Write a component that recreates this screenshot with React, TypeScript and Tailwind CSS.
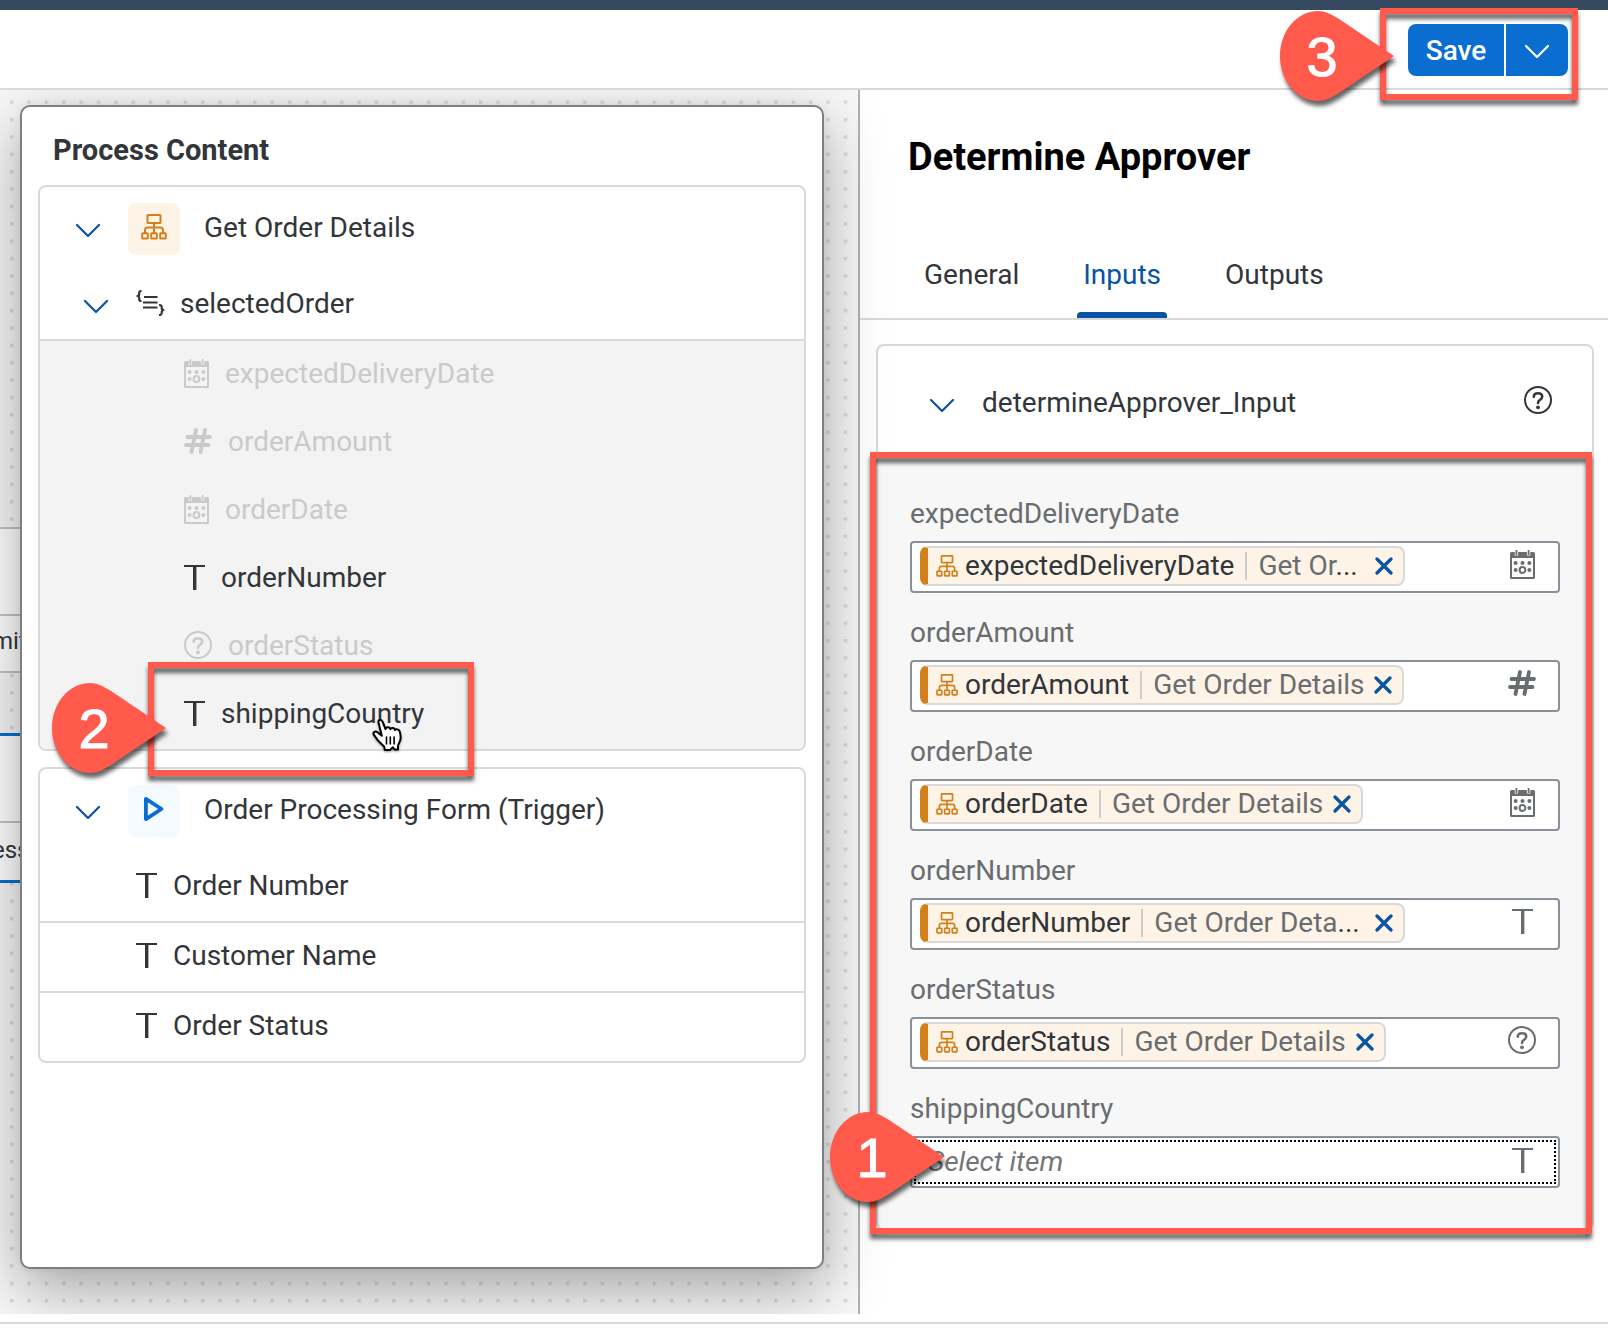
import type { ReactNode } from "react";

type Kind = "date" | "number" | "text" | "unknown";

function Chevron({ className = "" }: { className?: string }) {
  return (
    <svg viewBox="0 0 24 24" className={"h-6 w-6 shrink-0 " + className} fill="none" stroke="currentColor" strokeWidth="2.2" strokeLinecap="round" strokeLinejoin="round" aria-hidden="true">
      <path d="M1 10 12 21 23 10" />
    </svg>
  );
}

function HierarchyIcon({ className = "" }: { className?: string }) {
  return (
    <svg viewBox="0 0 26 26" className={"shrink-0 " + className} fill="none" stroke="currentColor" strokeWidth="2" strokeLinejoin="round" aria-hidden="true">
      <rect x="6.500" y="1" width="13" height="8" rx="0.600" />
      <path d="M13 9v10M4 19v-3q0-2.500 2.500-2.500h13q2.500 0 2.500 2.500v3" />
      <rect x="1.200" y="19.200" width="5.600" height="5.400" rx="0.600" />
      <rect x="10.200" y="19.200" width="5.600" height="5.400" rx="0.600" />
      <rect x="19.200" y="19.200" width="5.600" height="5.400" rx="0.600" />
    </svg>
  );
}

function ObjectIcon() {
  return (
    <svg viewBox="0 0 30 26" className="h-[26px] w-[30px] shrink-0" fill="none" stroke="#32363a" strokeWidth="2.200" aria-hidden="true">
      <path d="M5.500 1H5Q3.200 1 3.200 3v1.200Q3.200 6 .6 6q2.600 0 2.600 1.800V9Q3.200 11 5 11h.5" />
      <path d="M23 15h.5q2.200 0 2.200 2v1.200q0 1.800 2.600 1.800-2.600 0-2.600 1.800V23q0 2-2.200 2H23" />
      <path strokeWidth="1.900" d="M8 7H21.500M7 12.500H21.500M7 17.500H21.500" />
    </svg>
  );
}

function CalendarIcon() {
  return (
    <svg viewBox="0 0 25 29" className="h-[29px] w-[25px] shrink-0" fill="currentColor" aria-hidden="true">
      <path d="M5.500 0h1.800v5H5.500zM17.700 0h1.800v5h-1.800z" />
      <path fillRule="evenodd" d="M1.500 2h3.200v3.400h3.400V2h8.800v3.400h3.400V2h3.200Q25 2 25 3.500v24q0 1.500-1.500 1.500h-22Q0 29 0 27.500v-24Q0 2 1.500 2zM2 8v19h21V8z" />
      <circle cx="5.600" cy="13" r="2" />
      <circle cx="12.500" cy="13" r="2" />
      <circle cx="19.400" cy="13" r="2" />
      <circle cx="5.600" cy="20" r="2" />
      <circle cx="19.400" cy="20" r="2" />
      <circle cx="12.500" cy="20" r="2.900" fill="none" stroke="currentColor" strokeWidth="2" />
    </svg>
  );
}

function HashIcon() {
  return (
    <svg viewBox="0 0 28 26" className="h-[26px] w-7 shrink-0" fill="none" stroke="currentColor" strokeWidth="3.800" strokeLinecap="round" aria-hidden="true">
      <path d="M3.500 9H26M2 17h22.500M12 2 7.500 24M21 2l-4.500 22" />
    </svg>
  );
}

function TextIcon() {
  return (
    <svg viewBox="0 0 21 25" className="h-[25px] w-[21px] shrink-0" fill="currentColor" aria-hidden="true">
      <rect x="0" y="0" width="21" height="2" />
      <rect x="9" y="0" width="3.400" height="25" />
    </svg>
  );
}

function HelpIcon() {
  return (
    <svg viewBox="0 0 28 28" className="h-7 w-7 shrink-0" fill="none" stroke="currentColor" strokeWidth="2" strokeLinecap="round" aria-hidden="true">
      <circle cx="14" cy="14" r="13" />
      <path strokeWidth="2.600" d="M9.800 10.800Q9.800 7.200 14 7.200t4.200 3.400q0 2-2.200 3.200-2 1-2 3.200" />
      <circle cx="14" cy="21.300" r="1.900" fill="currentColor" stroke="none" />
    </svg>
  );
}

function KindIcon({ kind }: { kind: Kind }) {
  if (kind === "date") return <CalendarIcon />;
  if (kind === "number") return <HashIcon />;
  if (kind === "text") return <TextIcon />;
  return <HelpIcon />;
}

/* Numbered teardrop marker whose tip points to the right. */
function Callout({ n, className }: { n: number; className: string }) {
  return (
    <div className={"pointer-events-none absolute z-40 h-[90px] w-[115px] " + className}>
      <svg viewBox="0 0 115 90" className="absolute inset-0 h-full w-full overflow-visible drop-shadow-[2px_5px_2px_rgba(0,0,0,0.6)]" aria-hidden="true">
        <path fill="#ff5a4b" d="M114 45C96 33 74 18 59 8 51 3 45 0 38 0 17 0 0 20 0 45s17 45 38 45c7 0 13-3 21-8 15-10 37-25 55-37Z" />
      </svg>
      <span className="absolute inset-y-0 left-0 flex w-[84px] items-center justify-center pt-0.5 font-['Liberation_Sans',sans-serif] text-[56px] leading-none text-white [-webkit-text-stroke:1px_white]">{n}</span>
    </div>
  );
}

function Frame({ className }: { className: string }) {
  return <div className={"pointer-events-none absolute z-30 border-[6px] border-[#ff5a4b] drop-shadow-[0_5px_2px_rgba(0,0,0,0.6)] " + className} />;
}

function HandCursor() {
  return (
    <svg viewBox="0 0 30 32" className="pointer-events-none absolute top-[38px] left-[332px] z-20 h-8 w-[30px] drop-shadow-[0_1px_1px_rgba(0,0,0,0.4)]" fill="#fff" stroke="#000" strokeWidth="2" strokeLinejoin="round" strokeLinecap="round" aria-hidden="true">
      <path d="M6.500 3.500C5.800.600 9.300 0 10.500 2.700L13.500 10c.8-2.300 4.300-2.300 4.800.3.900-1.900 4.200-1.500 4.600.7 1.200-1.300 4.200-.8 4.800 1.400.8 3 1.200 5 .8 7.500-.4 3-2 4.500-2.500 7v3.600h-3.500l-1.600-2.200-3 2.700h-5l-.8-3.500C9 25 4.500 20.500 1.700 15.500c-1-2.500 1.700-3.900 3.800-2.300l4.300 3.600Z" />
      <path strokeWidth="1.600" d="M14.500 18v7M18.300 18v7M22.100 18v7" fill="none" />
    </svg>
  );
}

function GroupHead({ tile, label }: { tile: ReactNode; label: string }) {
  return (
    <div className="flex h-20 items-center pl-9">
      <button type="button" aria-label={"Collapse " + label} className="text-[#0854a0]">
        <Chevron />
      </button>
      <span className="mt-1 ml-7">{tile}</span>
      <span className="ml-6 pt-0.5">{label}</span>
    </div>
  );
}

const orderFields: { name: string; kind: Kind; enabled?: boolean }[] = [
  { name: "expectedDeliveryDate", kind: "date" },
  { name: "orderAmount", kind: "number" },
  { name: "orderDate", kind: "date" },
  { name: "orderNumber", kind: "text", enabled: true },
  { name: "orderStatus", kind: "unknown" },
];

function OrderRow({ name, kind, enabled, children }: { name: string; kind: Kind; enabled?: boolean; children?: ReactNode }) {
  return (
    <li className={"relative h-[68px] " + (enabled ? "text-[#32363a]" : "text-[#cacaca]")}>
      <button type="button" disabled={!enabled} className="flex h-full w-full items-center gap-4 pb-1 pl-36 text-left">
        <KindIcon kind={kind} />
        <span className="pt-0.5">{name}</span>
      </button>
      {children}
    </li>
  );
}

function ProcessContent() {
  return (
    <section className="relative z-10 flex flex-1 flex-col rounded-[10px] border-2 border-[#7f7f7f] bg-white px-4 shadow-[0_20px_60px_rgba(0,0,0,0.34),0_0_8px_rgba(0,0,0,0.06)]">
      <h2 className="h-[78px] pt-[25px] pl-[15px] text-[29px] leading-9 font-bold">Process Content</h2>

      <div className="rounded-lg border-2 border-[#d9d9d9]">
        <GroupHead
          label="Get Order Details"
          tile={
            <span className="flex h-[52px] w-[52px] items-center justify-center rounded-lg bg-[#fef3e7] pb-1">
              <HierarchyIcon className="h-[26px] w-[26px] text-[#d4801a]" />
            </span>
          }
        />
        <div className="flex h-[72px] items-center pl-11">
          <button type="button" aria-label="Collapse selectedOrder" className="text-[#0854a0]">
            <Chevron />
          </button>
          <span className="ml-7">
            <ObjectIcon />
          </span>
          <span className="ml-[14px] pt-0.5">selectedOrder</span>
        </div>
        <ul className="rounded-b-md border-t-2 border-[#d9d9d9] bg-[#f3f3f3]">
          {orderFields.map((f) => (
            <OrderRow key={f.name} {...f} />
          ))}
          <OrderRow name="shippingCountry" kind="text" enabled>
            <HandCursor />
            <Frame className="-top-[19px] left-[108px] h-[114px] w-[326px]" />
            <Callout n={2} className="top-0.5 left-3" />
          </OrderRow>
        </ul>
      </div>

      <div className="mt-4 rounded-lg border-2 border-[#d9d9d9]">
        <GroupHead
          label="Order Processing Form (Trigger)"
          tile={
            <span className="flex h-[52px] w-[52px] items-center justify-center rounded-lg bg-[#f5faff] pb-1">
              <svg viewBox="0 0 22 26" className="h-[26px] w-[22px]" fill="none" stroke="#0a6ed1" strokeWidth="3.800" strokeLinejoin="round" aria-hidden="true">
                <path d="M2.900 2.900v20.200L18.500 13Z" />
              </svg>
            </span>
          }
        />
        <ul className="divide-y-2 divide-[#d9d9d9]">
          {["Order Number", "Customer Name", "Order Status"].map((name) => (
            <li key={name} className="first:pt-1">
              <button type="button" className="flex h-[68px] w-full items-center gap-4 pb-1 pl-24 text-left">
                <TextIcon />
                <span className="pt-0.5">{name}</span>
              </button>
            </li>
          ))}
        </ul>
      </div>
    </section>
  );
}

/* Dotted workflow canvas with the edges of two steps showing beside the popover. */
function Canvas() {
  return (
    <div className="relative flex min-w-0 flex-col border-r-2 border-[#b0b0b0] bg-[#f7f7f7] pt-[15px] pr-[34px] pb-[45px] pl-5">
      <svg className="absolute inset-0 h-full w-full" aria-hidden="true">
        <defs>
          <pattern id="dots" width="17.370" height="17.370" patternUnits="userSpaceOnUse" x="10" y="10.500">
            <rect width="3.400" height="3.400" fill="#d9d9d9" />
          </pattern>
        </defs>
        <rect width="100%" height="100%" fill="url(#dots)" />
      </svg>
      <div className="absolute top-[437px] left-0 h-[146px] w-10 overflow-hidden border-y-2 border-[#c4c4c4] bg-white text-[24px]">
        <div className="mt-[85px] h-[57px] border-t-2 border-[#c4c4c4] leading-[50px]">
          <span className="-ml-2">mit</span>
        </div>
      </div>
      <div className="absolute top-[643px] left-0 h-[150px] w-10 overflow-hidden border-y-[3px] border-[#0a6ed1] bg-white text-[24px]">
        <div className="mt-[85px] h-[57px] border-t-2 border-[#c4c4c4] leading-[54px]">
          <span className="-ml-2">ess</span>
        </div>
      </div>
      <ProcessContent />
    </div>
  );
}

const inputs: { name: string; kind: Kind; source: string; cut?: boolean }[] = [
  { name: "expectedDeliveryDate", kind: "date", source: "Get Or", cut: true },
  { name: "orderAmount", kind: "number", source: "Get Order Details" },
  { name: "orderDate", kind: "date", source: "Get Order Details" },
  { name: "orderNumber", kind: "text", source: "Get Order Deta", cut: true },
  { name: "orderStatus", kind: "unknown", source: "Get Order Details" },
];

function TokenField({ name, kind, source, cut }: { name: string; kind: Kind; source: string; cut?: boolean }) {
  return (
    <div>
      <label htmlFor={name} className="block pt-6 pb-[11px] leading-8 text-[#6a6d70]">
        {name}
      </label>
      <div className="flex h-[52px] items-start rounded border-2 border-[#89919a] bg-white pr-[22px] pl-2">
        <div className={"mt-[3px] flex h-10 items-center rounded-lg border-2 border-l-8 border-[#d9d9d9] border-l-[#d4801a] bg-[#fef3e7] pr-[10px] pl-2 whitespace-nowrap " + (cut ? "w-[485px]" : "")}>
          <HierarchyIcon className="h-[22px] w-[22px] text-[#d4801a]" />
          <span className="ml-[7px]">{name}</span>
          <span className="mx-[11px] h-7 w-0.5 bg-[#ccc]" />
          <span className="text-[#6a6d70]">
            {source}
            {cut && <span className="text-[#32363a]">...</span>}
          </span>
          <button type="button" aria-label={"Remove " + name} className={"text-[#0854a0] " + (cut ? "ml-auto" : "ml-[10px]")}>
            <svg viewBox="0 0 18 18" className="h-[18px] w-[18px]" fill="none" stroke="currentColor" strokeWidth="3.200" strokeLinecap="round" aria-hidden="true">
              <path d="M2 2l14 14M16 2 2 16" />
            </svg>
          </button>
        </div>
        <input id={name} type="text" className="h-full min-w-0 flex-1 bg-transparent outline-none" />
        <span className="flex h-full w-7 items-center justify-center pb-1.5 text-[#6a6d70]">
          <KindIcon kind={kind} />
        </span>
      </div>
    </div>
  );
}

function Tab({ children, active }: { children: string; active?: boolean }) {
  return (
    <button type="button" role="tab" aria-selected={!!active} className={"relative px-1.5 pt-0.5 " + (active ? "text-[#0854a0]" : "")}>
      {children}
      {active && <span className="absolute inset-x-0 bottom-0 h-1.5 rounded-t bg-[#0854a0]" />}
    </button>
  );
}

function DetailsPanel() {
  return (
    <aside className="min-w-0 bg-white">
      <h1 className="pt-[47px] pl-12 text-[38px] leading-10 font-bold text-black">Determine Approver</h1>
      <div role="tablist" className="mt-[53px] flex h-[90px] gap-[52px] border-b-2 border-[#d9d9d9] pl-[58px]">
        <Tab>General</Tab>
        <Tab active>Inputs</Tab>
        <Tab>Outputs</Tab>
      </div>

      <section className="mt-6 mr-[14px] ml-4 rounded-lg border-2 border-[#d9d9d9]">
        <div className="flex h-28 items-center pr-10 pl-[52px]">
          <button type="button" aria-label="Collapse determineApprover_Input" className="text-[#0854a0]">
            <Chevron />
          </button>
          <span className="ml-7 pt-0.5">determineApprover_Input</span>
          <button type="button" aria-label="Help" className="mb-1 ml-auto">
            <HelpIcon />
          </button>
        </div>
        <div className="relative rounded-b-md bg-[#f7f7f7] px-8 pt-4 pb-10">
          {inputs.map((f) => (
            <TokenField key={f.name} {...f} />
          ))}
          <div>
            <label htmlFor="shippingCountry" className="block pt-6 pb-[11px] leading-8 text-[#6a6d70]">
              shippingCountry
            </label>
            <div className="h-[52px] rounded border-2 border-[#89919a] bg-white p-0.5">
              <div className="flex h-full items-center border-2 border-dotted border-black pr-[18px] pl-3">
                <input id="shippingCountry" type="text" placeholder="Select item" className="min-w-0 flex-1 bg-transparent outline-none placeholder:text-[#74777a] placeholder:italic" />
                <span className="flex h-full w-7 items-center justify-center pb-1 text-[#6a6d70]">
                  <TextIcon />
                </span>
              </div>
            </div>
          </div>
          <Frame className="-top-1.5 right-0 -bottom-1.5 -left-2" />
          <Callout n={1} className="bottom-[26px] -left-12" />
        </div>
      </section>
    </aside>
  );
}

export default function App() {
  return (
    <div className="flex min-h-screen flex-col bg-white font-[Roboto,'Open_Sans',sans-serif] text-[28px] leading-8 text-[#32363a]">
      <div className="h-[10px] bg-[#354a5f]" />
      <header className="flex h-20 items-start justify-end border-b-2 border-[#d9d9d9] pt-[14px] pr-10">
        <div className="relative flex h-[52px] gap-0.5 text-white">
          <button type="button" className="w-24 rounded-l-lg bg-[#0a6ed1] pt-0.5 font-medium">
            Save
          </button>
          <button type="button" aria-label="More save options" className="flex w-[62px] items-center justify-center rounded-r-lg bg-[#0a6ed1] pb-1">
            <Chevron />
          </button>
          <Frame className="-top-4 -right-[10px] -bottom-6 -left-7" />
          <Callout n={3} className="-top-[13px] -left-32" />
        </div>
      </header>
      <main className="grid flex-1 grid-cols-[860fr_748fr] overflow-clip">
        <Canvas />
        <DetailsPanel />
      </main>
      <footer className="pt-2 pb-2">
        <hr className="border-t-2 border-[#d9d9d9]" />
      </footer>
    </div>
  );
}
